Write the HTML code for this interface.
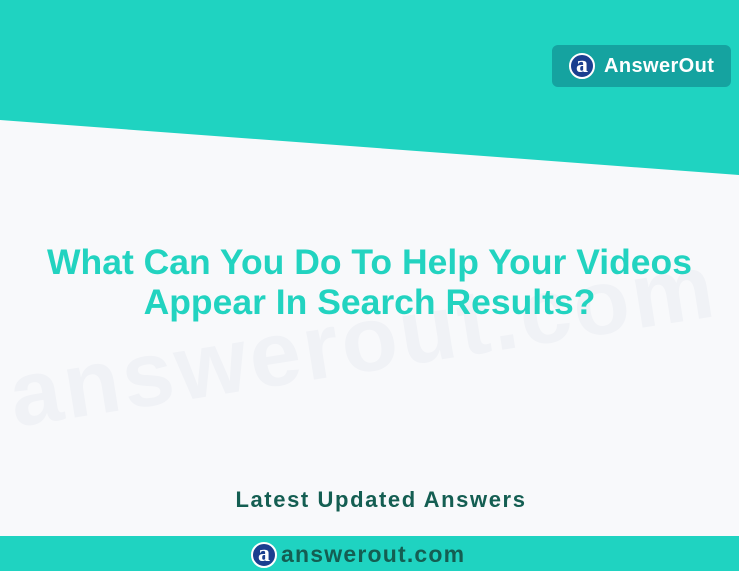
<!DOCTYPE html>
<html><head><style>
body{margin:0;width:739px;height:571px;overflow:hidden;background:#f8f9fb;font-family:"Liberation Sans",sans-serif;position:relative}
.top{position:absolute;left:0;top:0;width:739px;height:180px;background:#1fd3c1;clip-path:polygon(0 0,739px 0,739px 175px,0 120px)}
.badge{position:absolute;left:552px;top:45px;width:179px;height:42px;background:#15a3a0;border-radius:6px;color:#fff;font-weight:bold;font-size:20px;letter-spacing:0.4px;display:flex;align-items:center}
.logo{width:26px;height:26px;border-radius:50%;background:#1b3f8f;border:2px solid #fff;box-sizing:border-box;color:#fff;font-family:"Liberation Serif",serif;font-size:24px;line-height:20px;text-align:center;display:inline-block;letter-spacing:0}
.wm{position:absolute;left:2px;top:345px;font-size:92px;font-weight:bold;color:#f0f2f6;transform:rotate(-9deg);transform-origin:left top;letter-spacing:3px}
h1{position:absolute;left:0;width:739px;top:242px;margin:0;text-align:center;color:#22d3c0;font-size:35.5px;line-height:40px;font-weight:bold}
.latest{position:absolute;left:0;width:762px;top:487px;text-align:center;color:#145e52;font-weight:bold;font-size:22px;letter-spacing:1.6px}
.bot{position:absolute;left:0;top:536px;width:739px;height:35px;background:#1fd3c1}
.bl{position:absolute;left:251px;top:541px;display:flex;align-items:center;color:#145e52;font-weight:bold;font-size:23px;letter-spacing:1.2px}
</style></head><body>
<div class="top"></div>
<div class="wm">answerout.com</div>
<div class="badge"><span class="logo" style="margin-left:17px;margin-right:9px">a</span>AnswerOut</div>
<h1>What Can You Do To Help Your Videos<br>Appear In Search Results?</h1>
<div class="latest">Latest Updated Answers</div>
<div class="bot"></div>
<div class="bl"><span class="logo" style="margin-right:4px">a</span>answerout.com</div>
</body></html>
